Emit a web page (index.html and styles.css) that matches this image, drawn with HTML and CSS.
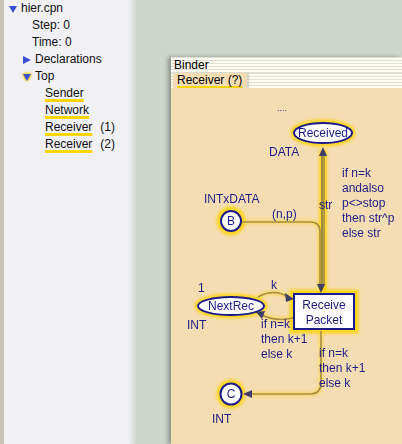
FILE: index.html
```html
<!DOCTYPE html>
<html lang="en">
<head>
  <meta charset="UTF-8" />
  <title>hier.cpn - Receiver</title>
  <link rel="stylesheet" href="styles.css">
</head>
<body>
  <div class="tree">
    <div class="row lvl0"><span class="tri down"></span>hier.cpn</div>
    <div class="row lvl1">Step: 0</div>
    <div class="row lvl1">Time: 0</div>
    <div class="row lvl1 has-tri"><span class="tri right"></span>Declarations</div>
    <div class="row lvl1 has-tri"><span class="tri down glow"></span>Top</div>
    <div class="row lvl2"><span class="mark">Sender</span></div>
    <div class="row lvl2"><span class="mark">Network</span></div>
    <div class="row lvl2"><span class="mark">Receiver</span><span class="inst">(1)</span></div>
    <div class="row lvl2"><span class="mark">Receiver</span><span class="inst">(2)</span></div>
  </div>
  <div class="fade"></div>

  <div class="desk">
    <div class="binder">
      <div class="binder-head">Binder</div>
      <div class="tabs">
        <div class="tab"><span class="mark">Receiver (?)</span></div>
      </div>
      <div class="page">
        <svg class="net" width="231" height="356" viewBox="171 88 231 356">
          <defs>
            <filter id="blur" x="-50%" y="-50%" width="200%" height="200%">
              <feGaussianBlur stdDeviation="1.6"/>
            </filter>
          </defs>

          <!-- glow under nodes and the active arc -->
          <g class="glow" filter="url(#blur)">
            <ellipse cx="323" cy="133" rx="30" ry="11"/>
            <circle cx="231" cy="221" r="12"/>
            <ellipse cx="231" cy="306" rx="34" ry="10"/>
            <circle cx="231" cy="394" r="12"/>
            <rect x="292" y="292" width="64" height="39"/>
            <line x1="323" y1="150" x2="323" y2="292" class="wide"/>
            <path d="M241 222 H310 Q320 222 320 232 V286" class="thin"/>
            <path d="M258 297 Q274 288 290 298" class="thin"/>
            <path d="M293 318 Q276 322 258 313" class="thin"/>
            <path d="M321 331 V383 Q321 394 310 394 H250" class="thin"/>
          </g>

          <!-- arcs -->
          <g class="arc">
            <line x1="324" y1="154" x2="324" y2="286"/>
            <line x1="322" y1="154" x2="322" y2="286" class="dark"/>
            <path d="M241 222 H310 Q320 222 320 232 V286"/>
            <path d="M258 297 Q274 288 288 297"/>
            <path d="M293 318 Q276 322 262 315"/>
            <path d="M321 331 V383 Q321 394 310 394 H251"/>
          </g>
          <g class="head">
            <polygon points="323,147 319,156 327,156"/>
            <polygon points="321,293 317,284 325,284"/>
            <polygon points="294,299 285,293 286,302"/>
            <polygon points="256,312 265,311 262,319"/>
            <polygon points="243,394 252,390 252,398"/>
          </g>

          <!-- places and transition -->
          <g class="node">
            <ellipse cx="323" cy="133" rx="29" ry="10"/>
            <circle cx="231" cy="221" r="10"/>
            <ellipse cx="231" cy="306" rx="33" ry="9"/>
            <circle cx="231" cy="394" r="10.5"/>
            <rect x="294" y="294" width="60" height="35"/>
          </g>

          <g class="lbl">
            <text x="277" y="111" class="small">....</text>
            <text x="323" y="137" text-anchor="middle">Received</text>
            <text x="269" y="156">DATA</text>
            <text x="319" y="209">str</text>
            <text x="342" y="177">if n=k</text>
            <text x="342" y="192">andalso</text>
            <text x="342" y="207">p&lt;&gt;stop</text>
            <text x="342" y="222">then str^p</text>
            <text x="342" y="237">else str</text>
            <text x="204" y="203">INTxDATA</text>
            <text x="231" y="225" text-anchor="middle">B</text>
            <text x="272" y="218">(n,p)</text>
            <text x="198" y="292">1</text>
            <text x="271" y="289">k</text>
            <text x="231" y="310" text-anchor="middle">NextRec</text>
            <text x="187" y="329">INT</text>
            <text x="324" y="309" text-anchor="middle">Receive</text>
            <text x="324" y="324" text-anchor="middle">Packet</text>
            <text x="261" y="328">if n=k</text>
            <text x="261" y="343">then k+1</text>
            <text x="261" y="358">else k</text>
            <text x="319" y="357">if n=k</text>
            <text x="319" y="372">then k+1</text>
            <text x="319" y="387">else k</text>
            <text x="231" y="398" text-anchor="middle">C</text>
            <text x="212" y="423">INT</text>
          </g>
        </svg>
      </div>
    </div>
  </div>
</body>
</html>
```

FILE: styles.css
```css
* {
  box-sizing: border-box;
}

body {
  margin: 0;
  width: 402px;
  height: 444px;
  overflow: hidden;
  display: flex;
  font-family: 'Liberation Sans', Arial, sans-serif;
  font-size: 12px;
  background: #cdd6cc;
}

/* index tree on the left */
.tree {
  width: 128px;
  flex: none;
  background: #f0f0f5;
  border-left: 4px solid;
  border-image: linear-gradient(90deg, #c9c2b6 0 2px, #ece8e0 2px 3px, #cfc9be 3px 4px) 1;
  color: #111;
}

.row {
  height: 17px;
  line-height: 17px;
  white-space: nowrap;
  display: flex;
  align-items: center;
}

.lvl0 { padding-left: 4px; }
.lvl1 { padding-left: 28px; }
.lvl1.has-tri { padding-left: 18px; }
.lvl2 { padding-left: 41px; }

.tri {
  width: 10px;
  height: 10px;
  margin-right: 3px;
  position: relative;
}

.tri::after {
  content: '';
  position: absolute;
  left: 1px;
  top: 1px;
  border-style: solid;
  border-color: transparent;
}

.tri.down::after {
  border-width: 7px 4px 0 4px;
  border-top-color: #3c4fd0;
  top: 2px;
}

.tri.right::after {
  border-width: 4px 0 4px 8px;
  border-left-color: #3c4fd0;
}

.tri.glow::after {
  filter: drop-shadow(0 0 1.5px #ffcc00) drop-shadow(0 0 1px #ffd800);
}

.mark {
  text-decoration: underline;
  text-decoration-color: #ffd600;
  text-decoration-thickness: 3px;
  text-underline-offset: 2px;
}

.inst {
  margin-left: 8px;
}

.fade {
  width: 9px;
  flex: none;
  background: linear-gradient(90deg, #f0f0f5, #cdd6cc);
}

/* workspace */
.desk {
  flex: 1;
  padding: 57px 0 0 34px;
  display: flex;
}

.binder {
  flex: 1;
  display: flex;
  flex-direction: column;
  box-shadow: -3px 0 4px rgba(60, 70, 60, 0.45);
}

.binder-head,
.tabs {
  background: repeating-linear-gradient(180deg, #e0e0d6 0 1px, #fbfbf2 1px 3px);
}

.binder-head {
  height: 16px;
  line-height: 16px;
  padding-left: 3px;
  color: #000;
}

.tabs {
  height: 15px;
  display: flex;
  padding-left: 2px;
}

.tab {
  background: #f5ddb3;
  padding: 0 5px 0 4px;
  line-height: 15px;
  box-shadow: 2px 0 1px rgba(0, 0, 0, 0.12);
  color: #000;
}

.page {
  flex: 1;
  background: #f5ddb3;
}

.net {
  display: block;
}

.glow * {
  fill: none;
  stroke: #ffd400;
  stroke-width: 5;
  opacity: 0.85;
}

.glow .wide {
  stroke-width: 8;
}

.glow .thin {
  stroke-width: 4;
  opacity: 0.5;
}

.arc * {
  fill: none;
  stroke: #a48c48;
  stroke-width: 1.6;
}

.arc .dark {
  stroke: #8a7a40;
}

.head polygon {
  fill: #3f3f66;
}

.node * {
  fill: #fff;
  stroke: #1c1c88;
  stroke-width: 2;
}

.lbl text {
  font-family: 'Liberation Sans', Arial, sans-serif;
  font-size: 12px;
  fill: #1c1c88;
}

.lbl .small {
  font-size: 9px;
}
```
